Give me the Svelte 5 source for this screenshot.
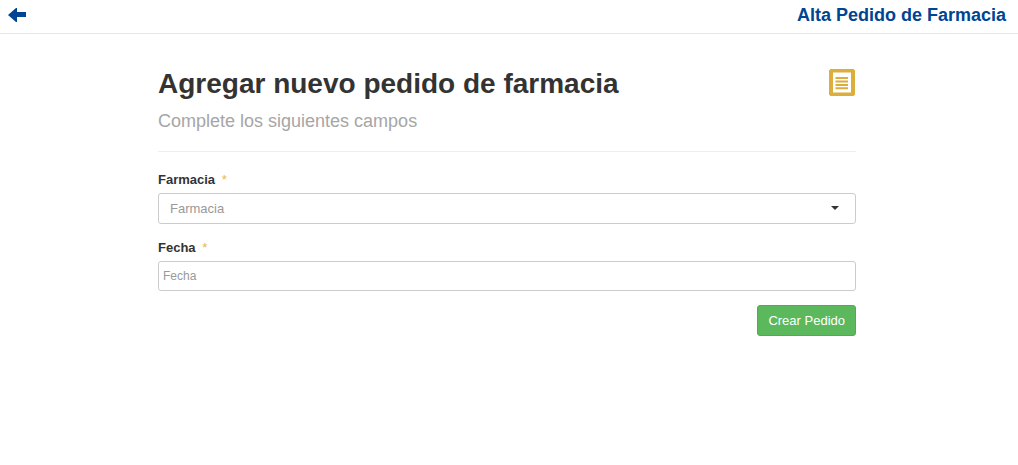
<script>
  let farmacia = $state('');
  let fecha = $state('');
</script>

<svelte:head><title>Alta Pedido de Farmacia</title></svelte:head>

<header>
  <a class="back" href="#volver" aria-label="Volver">
    <svg width="18" height="14" viewBox="0 0 18 14"><path d="M0 7 8 0h1v4h9v5H9v5H8z" fill="currentColor" /></svg>
  </a>
  <span class="title">Alta Pedido de Farmacia</span>
</header>

<main>
  <div class="head">
    <div>
      <h1>Agregar nuevo pedido de farmacia</h1>
      <p>Complete los siguientes campos</p>
    </div>
    <a class="list" href="#pedidos" aria-label="Lista de pedidos">
      <svg width="26" height="27" viewBox="0 0 26 27">
        <path fill="currentColor" fill-rule="evenodd" d="M1.5 0h23L26 1.500v24L24.500 27h-23L0 25.500v-24zM4 3.500v20h18v-20z" />
        <path d="M6.500 9H19M6.500 12.500H19M6.500 16H19M6.500 19.200H19" stroke="currentColor" stroke-width="2" />
      </svg>
    </a>
  </div>

  <form onsubmit={(e) => e.preventDefault()}>
    <label for="farmacia">Farmacia <span>*</span></label>
    <div class="select">
      <select id="farmacia" bind:value={farmacia}>
        <option value="">Farmacia</option>
      </select>
      <svg width="8" height="4" viewBox="0 0 8 4"><path d="M0 0h8L4 4z" fill="#333" /></svg>
    </div>
    <label for="fecha">Fecha <span>*</span></label>
    <input id="fecha" type="text" placeholder="Fecha" bind:value={fecha} />
    <div class="actions"><button type="submit">Crear Pedido</button></div>
  </form>
</main>

<style>
  :global(body) {
    background: #fff;
    color: #333;
    font-family: "Liberation Sans", Arial, sans-serif;
    font-size: 13px;
    line-height: 20px;
  }
  header {
    display: flex;
    align-items: center;
    justify-content: space-between;
    box-sizing: border-box;
    height: 34px;
    padding: 0 12px 4px 8px;
    border-bottom: 1px solid #e7e7e7;
    color: #004494;
  }
  .back, .list { display: flex; }
  .back { color: inherit; }
  .title { font-size: 18px; font-weight: bold; }
  main {
    max-width: 698px;
    margin: 0 auto;
    padding: 34px 4px 0 0;
  }
  .head {
    display: flex;
    justify-content: space-between;
    align-items: flex-start;
    padding: 0 1px 20px 0;
    border-bottom: 1px solid #eee;
  }
  h1 { margin: 0; font-size: 28px; line-height: 32px; }
  p { margin: 11px 0 0; font-size: 18px; line-height: 20px; color: #a6a6a6; }
  .list { color: #dcae3c; padding-top: 1px; }
  form { padding-top: 18px; }
  label { display: block; margin-bottom: 3px; font-weight: bold; }
  label span { margin-left: 3px; color: #e6b84c; font-weight: normal; }
  .select { position: relative; margin-bottom: 14px; }
  .select svg { position: absolute; right: 17px; top: 13px; pointer-events: none; }
  select, input {
    display: block;
    box-sizing: border-box;
    width: 100%;
    border: 1px solid #ccc;
    border-radius: 3px;
    background: #fff;
    font: inherit;
  }
  select { appearance: none; height: 31px; padding: 0 11px; color: #999; }
  input { height: 30px; padding: 0 4px; font-size: 12px; }
  input::placeholder { color: #999; }
  .actions { display: flex; justify-content: flex-end; padding-top: 14px; }
  button {
    height: 31px;
    padding: 0 10px;
    border: 1px solid #4cae4c;
    border-radius: 3px;
    background: #5cb85c;
    color: #fff;
    font: inherit;
  }
</style>
